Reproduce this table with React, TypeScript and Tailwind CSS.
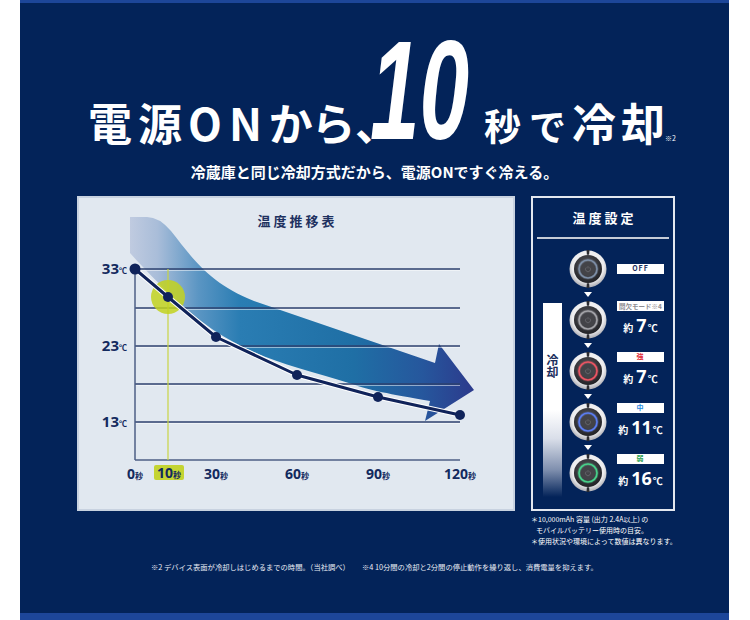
const dials = [
  { ring: "#7d8ea6", label: "OFF", labelColor: "text-[#1b2d5c]", temp: "" },
  { ring: "#a3a3a8", label: "間欠モード※4", labelColor: "text-[#8d8d92]", temp: "7" },
  { ring: "#ec5563", label: "強", labelColor: "text-[#e0303c]", temp: "7" },
  { ring: "#5b7df2", label: "中", labelColor: "text-[#2a8ae0]", temp: "11" },
  { ring: "#48d28b", label: "弱", labelColor: "text-[#2aa050]", temp: "16" },
];

function Dial({ ring, id }: { ring: string; id: number }) {
  return (
    <svg width="38" height="38" viewBox="0 0 38 38">
      <defs>
        <radialGradient id={`outer${id}`} cx="50%" cy="42%" r="55%">
          <stop offset="0%" stopColor="#ffffff" />
          <stop offset="78%" stopColor="#ececee" />
          <stop offset="100%" stopColor="#b6b6bc" />
        </radialGradient>
        <radialGradient id={`inner${id}`} cx="45%" cy="38%" r="62%">
          <stop offset="0%" stopColor="#5a5a60" />
          <stop offset="100%" stopColor="#222226" />
        </radialGradient>
      </defs>
      <circle cx="19" cy="19" r="18.5" fill={`url(#outer${id})`} />
      <circle cx="19" cy="19" r="14" fill={`url(#inner${id})`} />
      <circle cx="19" cy="19" r="9" fill="none" stroke={ring} strokeWidth="3.2" opacity="0.3" />
      <circle cx="19" cy="19" r="9" fill="none" stroke={ring} strokeWidth="1.6" />
      <circle cx="19" cy="19" r="7.2" fill="#434348" />
      <path d="M17.3 17.4a2.5 2.5 0 1 0 3.4 0" fill="none" stroke="#75757c" strokeWidth="0.6" />
      <path d="M19 16.1v2.3" stroke="#75757c" strokeWidth="0.6" />
      <path d="M17.5 0h3l-.4 4.8h-2.2z" fill="#2b2b30" />
      <path d="M17.5 38h3l-.4-4.8h-2.2z" fill="#2b2b30" />
    </svg>
  );
}

function Chart() {
  const pts = [
    [56, 71],
    [89, 99],
    [137, 139],
    [218, 177],
    [299, 199],
    [381, 217],
  ];
  const grid = [71, 110, 148, 186, 224];
  const line = pts.map((p) => p.join(",")).join(" ");
  const xs = [
    { x: 56, v: "0" },
    { x: 137, v: "30" },
    { x: 218, v: "60" },
    { x: 299, v: "90" },
    { x: 381, v: "120" },
  ];
  const ys = [
    { y: 76, v: "33" },
    { y: 153, v: "23" },
    { y: 229, v: "13" },
  ];
  return (
    <svg className="absolute left-0 top-0" width="438" height="315" viewBox="0 0 438 315">
      <defs>
        <linearGradient id="arrowGrad" x1="51" y1="0" x2="395" y2="0" gradientUnits="userSpaceOnUse">
          <stop offset="0" stopColor="#c0cbe0" />
          <stop offset="0.08" stopColor="#a9bdd9" />
          <stop offset="0.2" stopColor="#5a95c3" />
          <stop offset="0.32" stopColor="#2a7db3" />
          <stop offset="0.65" stopColor="#1f6fa5" />
          <stop offset="0.85" stopColor="#26579d" />
          <stop offset="1" stopColor="#2c3a8c" />
        </linearGradient>
      </defs>
      <path
        d="M51 19L68 19Q80 19 92 33C115 62 130 85 175 103L356 165L360 146L395 192L346 223L351 203C310 196 290 192 273 186C235 174 200 166 173 153C140 138 110 120 51 55Z"
        fill="url(#arrowGrad)"
      />
      {grid.map((y) => (
        <g key={y}>
          <line x1="56" x2="381" y1={y} y2={y} stroke="#2c416e" strokeWidth="1.4" />
          <line x1="56" x2="381" y1={y + 1.4} y2={y + 1.4} stroke="#ffffff" strokeWidth="0.8" opacity="0.7" />
        </g>
      ))}
      <line x1="56" y1="71" x2="56" y2="262" stroke="#4d5f86" strokeWidth="1.5" />
      <line x1="56" y1="262" x2="381" y2="262" stroke="#4d5f86" strokeWidth="1.5" />
      <line x1="89" y1="71" x2="89" y2="262" stroke="#c9d443" strokeWidth="1.2" />
      <circle cx="89" cy="99" r="17" fill="#c2d21f" opacity="0.85" />
      <polyline points={line} fill="none" stroke="#ffffff" strokeWidth="5" strokeLinejoin="round" />
      <polyline points={line} fill="none" stroke="#10235a" strokeWidth="3" strokeLinejoin="round" />
      {pts.map(([x, y], i) => (
        <circle key={x} cx={x} cy={y} r={i === 0 ? 5.5 : 5} fill="#10235a" />
      ))}
      <g fill="#132a5e" fontWeight="700" fontFamily="'Noto Sans', 'Noto Sans CJK JP', sans-serif">
        {ys.map((t) => (
          <text key={t.v} x="48" y={t.y} textAnchor="end" fontSize="15">
            {t.v}
            <tspan fontSize="8" fontFamily="'Noto Sans CJK JP', sans-serif">℃</tspan>
          </text>
        ))}
        {xs.map((t) => (
          <text key={t.v} x={t.x} y="281" textAnchor="middle" fontSize="14">
            {t.v}
            <tspan fontSize="8" fontFamily="'Noto Sans CJK JP', sans-serif">秒</tspan>
          </text>
        ))}
        <rect x="75" y="267" width="30" height="15" rx="2" fill="#c4d433" />
        <text x="90" y="280" textAnchor="middle" fontSize="14">
          10
          <tspan fontSize="8" fontFamily="'Noto Sans CJK JP', sans-serif">秒</tspan>
        </text>
      </g>
    </svg>
  );
}

export default function App() {
  return (
    <div className="h-[620px] w-[750px] bg-white font-['Noto_Sans_CJK_JP',sans-serif]">
      <div className="ml-[20px] h-[620px] w-[709px] border-t-[3px] border-b-[7px] border-[#1d4699] bg-[#032359] text-white">
        <div className="mt-[65.7px] h-[92.3px] whitespace-nowrap pl-[68px] text-[44px] leading-none font-bold">
          <span className="tracking-[6px]">電源</span>
          <span className="tracking-[7px]">ON</span>
          <span className="tracking-[2px] [font-feature-settings:'palt']">から、</span>
          <span className="-ml-[9px] inline-block w-[114px] align-[-9px]">
            <span className="inline-block origin-bottom-left scale-x-[0.99] scale-y-[1.56] font-['Liberation_Sans',sans-serif] text-[90px] leading-[1.117] italic">
              10
            </span>
          </span>
          <span className="text-[37px] tracking-[8px]">秒</span>
          <span className="text-[37px]">で</span>
          <span className="ml-[6px] tracking-[5px]">冷</span>
          <span>却</span>
          <span className="text-[7px] font-normal">※2</span>
        </div>

        <div className="mt-[3px] text-center text-[15px] leading-none font-bold">
          冷蔵庫と同じ冷却方式だから、電源ONですぐ冷える。
        </div>

        <div className="mt-[17px] flex items-start gap-[16px] pl-[57px]">
          <div className="relative h-[315px] w-[438px] border-2 border-[#c8d2e0] bg-[#e1e8f0]">
            <div className="pt-[16px] pl-[3px] text-center text-[13px] leading-none font-bold tracking-[3px] text-[#1e3160]">
              温度推移表
            </div>
            <Chart />
          </div>

          <div className="w-[144px]">
            <div className="h-[315px] border-2 border-[#e3e7ef]">
              <div className="pt-[13px] pl-[3px] text-center text-[13px] leading-none font-bold tracking-[3px]">
                温度設定
              </div>
              <div className="mx-[4px] mt-[13px] h-[2px] bg-[#c5cbd7]" />
              <div className="mt-[11px] flex">
                <div className="ml-[10px] mt-[53px] flex h-[194px] w-[19px] justify-center bg-[linear-gradient(to_bottom,#ffffff_0%,#ffffff_55%,#d9dee9_70%,#7f8fae_86%,#032359_100%)] pt-[51px]">
                  <span className="h-[30px] text-[12px] leading-[19px] font-bold text-[#1b2d5c] [writing-mode:vertical-rl]">
                    冷却
                  </span>
                </div>
                <div className="ml-[7px] flex flex-col items-center">
                  {dials.map((d, i) => (
                    <div key={i} className="flex flex-col items-center">
                      <Dial ring={d.ring} id={i} />
                      {i < dials.length - 1 && (
                        <div className="flex h-[13px] items-center">
                          <div className="h-0 w-0 border-t-[5px] border-r-[4px] border-l-[4px] border-t-white border-r-transparent border-l-transparent" />
                        </div>
                      )}
                    </div>
                  ))}
                </div>
                <div className="ml-[10px] flex flex-col gap-[13px]">
                  {dials.map((d, i) => (
                    <div key={i} className={`flex h-[38px] w-[47px] flex-col items-center ${i === 0 ? "justify-center" : "justify-start"}`}>
                      <div className={`flex h-[10px] w-[47px] items-center justify-center bg-white font-bold leading-none ${d.labelColor} ${i === 1 ? "text-[6.5px]" : "text-[7px] tracking-[1px]"}`}>
                        {d.label}
                      </div>
                      {d.temp && (
                        <div className="mt-[5px] flex items-baseline leading-none font-bold">
                          <span className="text-[10px]">約</span>
                          <span className="ml-[3px] font-['Noto_Sans',sans-serif] text-[18px]">{d.temp}</span>
                          <span className="ml-[1px] text-[10px]">℃</span>
                        </div>
                      )}
                    </div>
                  ))}
                </div>
              </div>
            </div>
            <div className="mt-[3px] text-[7px] leading-[11px] whitespace-nowrap">
              <div>＊10,000mAh 容量 (出力 2.4A以上) の</div>
              <div className="pl-[5px]">モバイルバッテリー使用時の目安。</div>
              <div>＊使用状況や環境によって数値は異なります。</div>
            </div>
          </div>
        </div>

        <div className="mt-[16px] flex justify-center gap-[12px] text-[7.3px] leading-[8px] text-[#e8ecf4]">
          <span>※2 デバイス表面が冷却しはじめるまでの時間。（当社調べ）</span>
          <span>※4 10分間の冷却と2分間の停止動作を繰り返し、消費電量を抑えます。</span>
        </div>
      </div>
    </div>
  );
}
